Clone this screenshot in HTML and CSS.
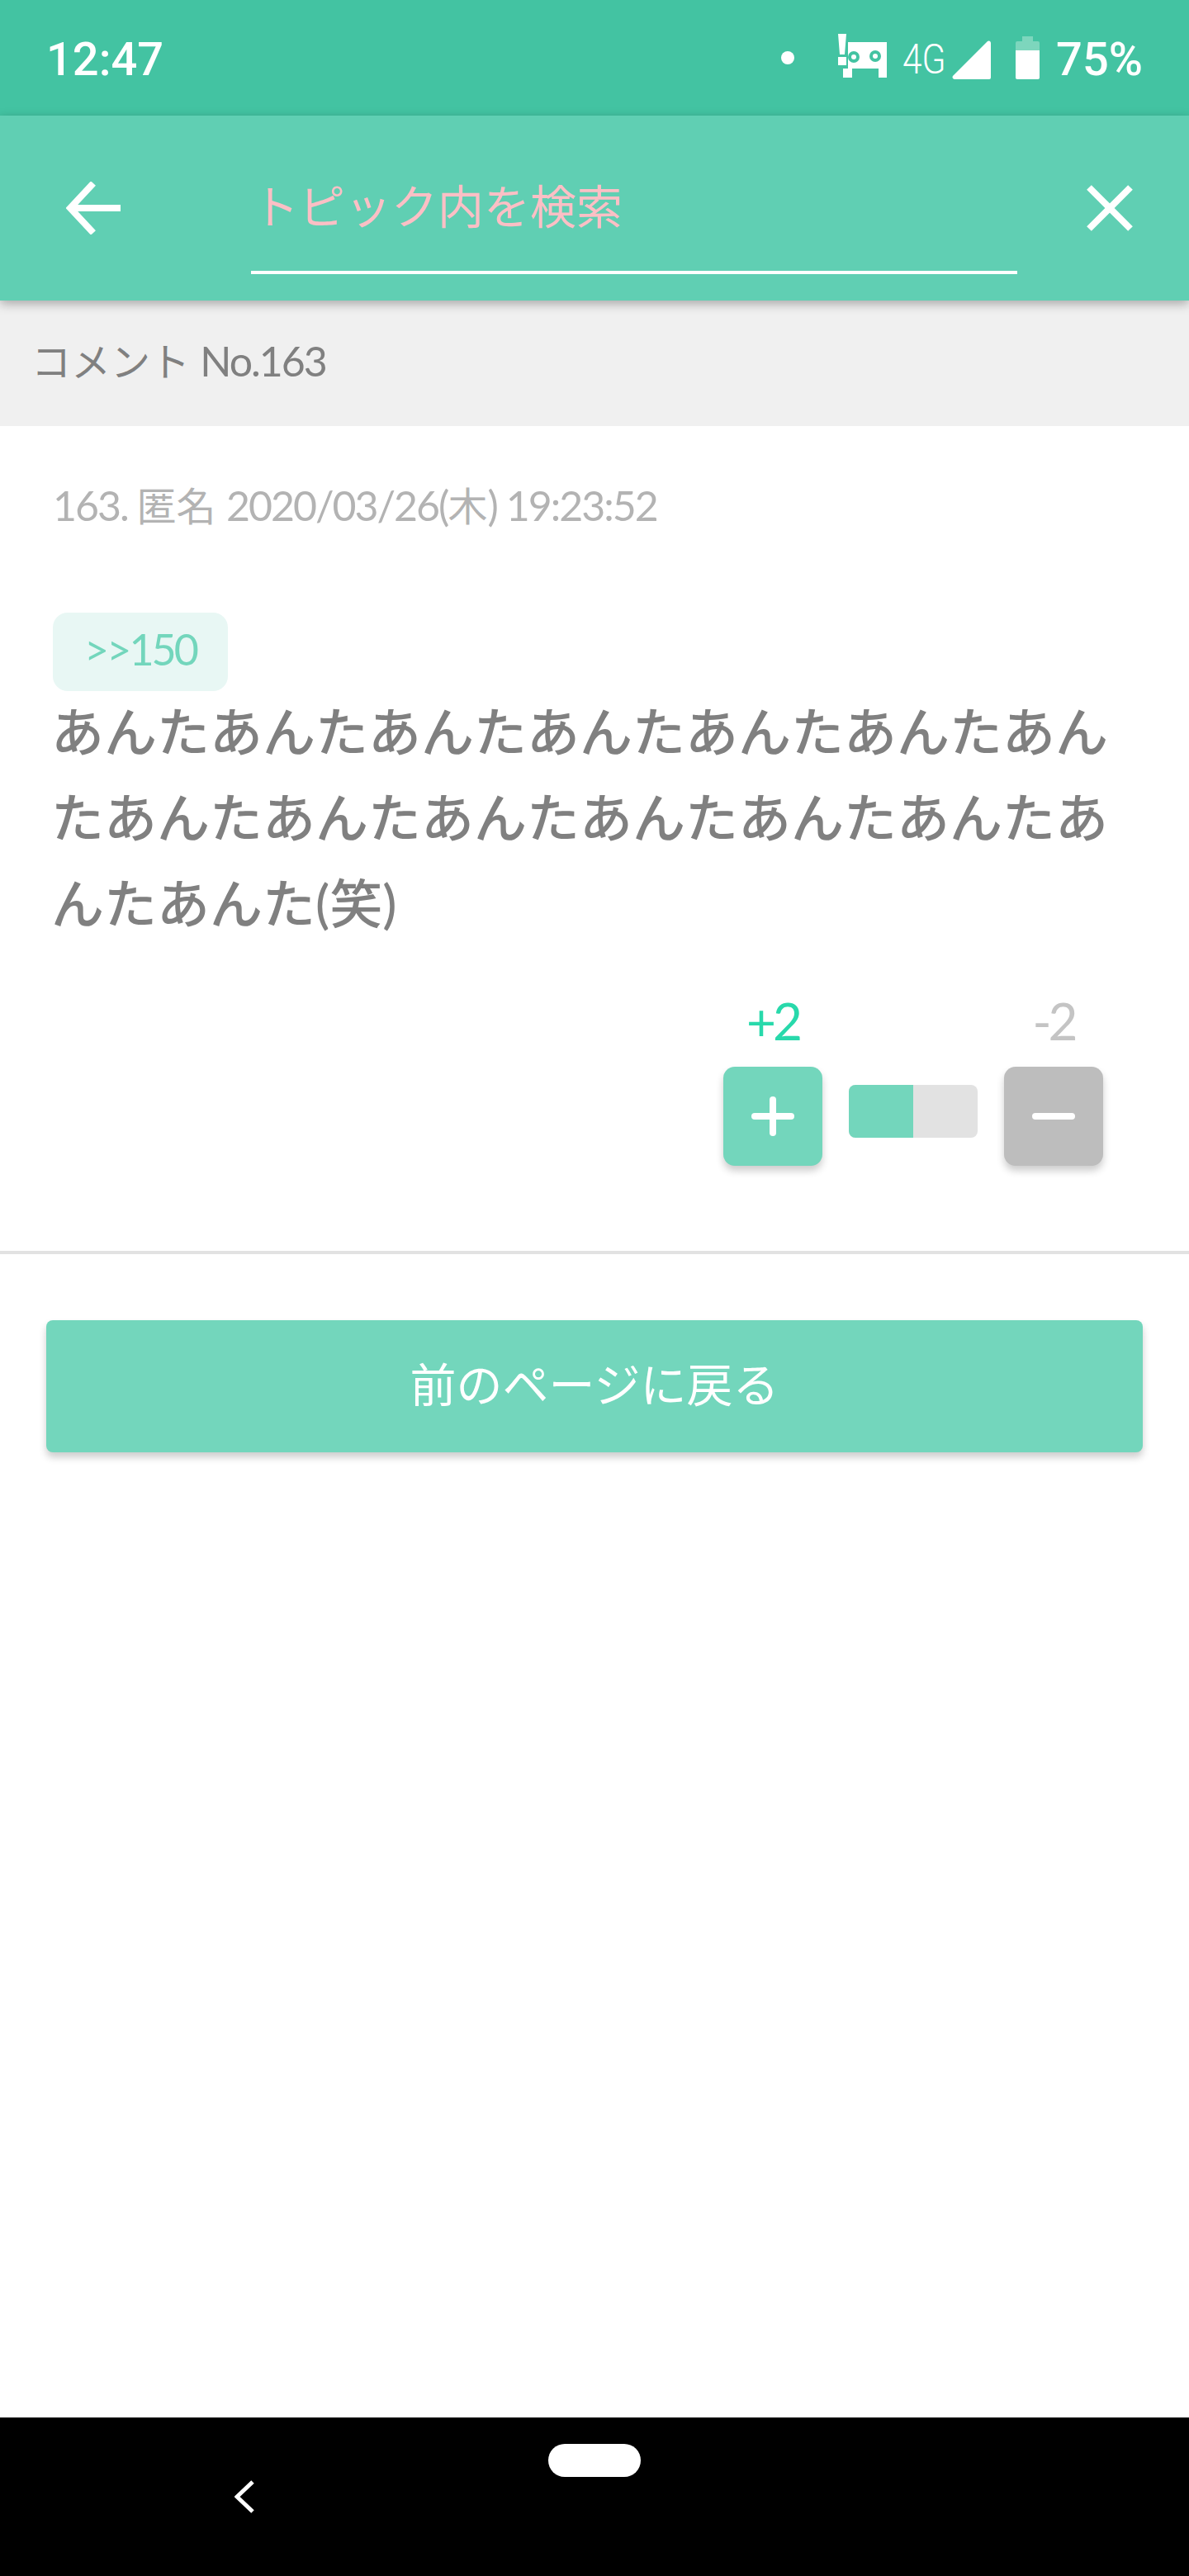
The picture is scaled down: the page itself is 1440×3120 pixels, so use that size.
FILE: index.html
```html
<!DOCTYPE html>
<html lang="ja">
<head>
    <meta charset="UTF-8">
    <title>コメント No.163</title>
    <link rel="stylesheet" href="styles.css">
</head>
<body>
    <div class="phone">
        <!-- status bar -->
        <div class="status">
            <span class="clock">12:47</span>
            <div class="status-icons">
                <span class="dot"></span>
                <svg class="carrier" width="61" height="53" viewBox="0 0 61 53">
                    <path fill="#fff" d="M1 0h10L9 25H3zM1 28h10v10H1z"/>
                    <path fill="#fff" d="M13 10h47v43H50V42H18v11H7V42h6z"/>
                    <circle cx="20" cy="28" r="7" fill="#43c3a2"/>
                    <circle cx="46" cy="27" r="7" fill="#43c3a2"/>
                    <circle cx="20" cy="28" r="3" fill="#fff"/>
                    <circle cx="46" cy="27" r="3" fill="#fff"/>
                </svg>
                <span class="net">4G</span>
                <svg class="signal" width="47" height="47" viewBox="0 0 47 47">
                    <path fill="#fff" d="M43 1a2.500 2.500 0 0 1 4 2v42a2 2 0 0 1-2 2H3a2.500 2.500 0 0 1-2-4z"/>
                </svg>
                <svg class="battery" width="29" height="52" viewBox="0 0 29 52">
                    <path fill="#7dd6bd" d="M8 0h13v6h6a2 2 0 0 1 2 2v9H0V8a2 2 0 0 1 2-2h6z"/>
                    <path fill="#fff" d="M0 17h29v33a2 2 0 0 1-2 2H2a2 2 0 0 1-2-2z"/>
                </svg>
                <span class="percent">75%</span>
            </div>
        </div>

        <!-- search header -->
        <header class="search-bar">
            <svg class="back" width="66" height="64" viewBox="0 0 66 64">
                <path fill="none" stroke="#fff" stroke-width="8" d="M33 2L5 32l28 30M5 32h61"/>
            </svg>
            <div class="search-field">トピック内を検索</div>
            <svg class="close" width="56" height="56" viewBox="0 0 56 56">
                <path fill="none" stroke="#fff" stroke-width="8" d="M3 3l50 50M53 3L3 53"/>
            </svg>
        </header>

        <div class="section-title"><span class="ja">コメント </span>No.163</div>

        <!-- comment -->
        <article class="comment">
            <div class="comment-meta">163. <span class="ja">匿名 </span>2020/03/26(<span class="ja">木</span>) 19:23:52</div>
            <a class="anchor">&gt;&gt;150</a>
            <p class="comment-body">あんたあんたあんたあんたあんたあんたあんたあんたあんたあんたあんたあんたあんたあんたあんた(笑)</p>
            <div class="votes">
                <div class="vote">
                    <span class="count plus">+2</span>
                    <button class="vote-btn plus-btn"><span class="bar-h"></span><span class="bar-v"></span></button>
                </div>
                <div class="ratio"><div class="ratio-fill"></div></div>
                <div class="vote">
                    <span class="count minus">-2</span>
                    <button class="vote-btn minus-btn"><span class="bar-h"></span></button>
                </div>
            </div>
        </article>

        <div class="back-wrap">
            <button class="back-page">前のページに戻る</button>
        </div>

        <!-- nav bar -->
        <div class="nav">
            <svg class="nav-back" width="24" height="40" viewBox="0 0 24 40">
                <path fill="none" stroke="#fff" stroke-width="5" d="M22 2L3 20l19 18"/>
            </svg>
            <span class="pill"></span>
        </div>
    </div>
</body>
</html>
```

FILE: styles.css
```css
* {
    box-sizing: border-box;
}

body {
    margin: 0;
    background: #fff;
    font-family: Lato, "Noto Sans CJK JP", sans-serif;
}

.phone {
    width: 1440px;
    height: 3120px;
    display: flex;
    flex-direction: column;
}

/* Japanese runs keep their own size inside narrowed latin text */
.ja {
    font-size: 48px;
    letter-spacing: 0;
}

/* status bar */
.status {
    height: 140px;
    background: #43c3a2;
    color: #fff;
    display: flex;
    align-items: center;
    justify-content: space-between;
    padding: 4px 56px 0 56px;
    font-family: Roboto, sans-serif;
}

.clock {
    font-size: 56px;
    font-weight: 500;
}

.status-icons {
    display: flex;
    align-items: center;
}

.dot {
    width: 16px;
    height: 16px;
    border-radius: 50%;
    background: #fff;
    margin: -4px 52px 0 0;
}

.carrier {
    margin: -10px 18px 0 0;
}

.net {
    width: 50px;
    font-size: 50px;
    font-weight: 300;
    transform: scaleX(0.85);
    transform-origin: left center;
    margin-right: 10px;
}

.signal {
    margin-right: 30px;
}

.battery {
    margin: -4px 20px 0 0;
}

.percent {
    font-size: 56px;
    font-weight: 500;
}

/* header */
.search-bar {
    height: 224px;
    background: #60cfb3;
    display: flex;
    align-items: center;
    padding: 0 68px 0 80px;
    box-shadow: 0 4px 12px rgba(0, 0, 0, 0.3);
    position: relative;
}

.search-field {
    width: 928px;
    height: 160px;
    margin: 0 84px 0 158px;
    border-bottom: 4px solid #fff;
    color: #fbbfc5;
    font-size: 56px;
    line-height: 156px;
    padding-left: 2px;
}

.section-title {
    height: 152px;
    background: #f0f0f0;
    color: #808080;
    font-size: 50px;
    letter-spacing: -2px;
    line-height: 146px;
    padding-left: 38px;
}

/* comment */
.comment {
    height: 1003px;
    padding: 0 64px;
    border-bottom: 4px solid #e2e2e2;
}

.comment-meta {
    color: #b3b3b3;
    font-size: 50px;
    letter-spacing: -2px;
    line-height: 60px;
    margin-top: 66px;
    margin-bottom: 99px;
}

.anchor {
    display: block;
    width: 212px;
    height: 95px;
    border-radius: 18px;
    background: #e8f7f4;
    color: #73d6bc;
    font-size: 52px;
    letter-spacing: -3px;
    line-height: 88px;
    text-align: center;
}

.comment-body {
    margin: -3px 0 0 -2px;
    width: 1300px;
    color: #808080;
    font-size: 64px;
    font-weight: 500;
    line-height: 104px;
}

.votes {
    display: flex;
    justify-content: flex-end;
    align-items: flex-end;
    gap: 32px;
    padding-right: 40px;
    margin-top: 36px;
}

.vote {
    display: flex;
    flex-direction: column;
    align-items: center;
    width: 120px;
}

.count {
    font-size: 62px;
    letter-spacing: -4px;
    line-height: 108px;
    margin-bottom: 2px;
}

.count.plus {
    color: #28d9ab;
}

.count.minus {
    color: #c4c4c4;
}

.vote-btn {
    width: 120px;
    height: 120px;
    border: 0;
    border-radius: 14px;
    position: relative;
    box-shadow: 0 6px 10px rgba(0, 0, 0, 0.2);
}

.plus-btn {
    background: #73d6bc;
}

.minus-btn {
    background: #bdbdbd;
}

.bar-h,
.bar-v {
    position: absolute;
    background: #fff;
    border-radius: 4px;
}

.bar-h {
    width: 52px;
    height: 8px;
    left: 34px;
    top: 56px;
}

.bar-v {
    width: 8px;
    height: 48px;
    left: 56px;
    top: 36px;
}

.ratio {
    width: 156px;
    height: 64px;
    border-radius: 8px;
    background: #e2e2e2;
    overflow: hidden;
    margin-bottom: 34px;
}

.ratio-fill {
    width: 50%;
    height: 100%;
    background: #73d6bc;
}

/* back button */
.back-wrap {
    flex: 1;
    padding: 80px 56px 0;
}

.back-page {
    width: 100%;
    height: 160px;
    border: 0;
    border-radius: 8px;
    background: #73d6bc;
    color: #fff;
    font-family: inherit;
    font-size: 56px;
    padding-bottom: 12px;
    box-shadow: 0 6px 10px rgba(0, 0, 0, 0.2);
}

/* nav bar */
.nav {
    height: 192px;
    background: #000;
    position: relative;
    flex-shrink: 0;
}

.nav-back {
    position: absolute;
    left: 284px;
    top: 76px;
}

.pill {
    position: absolute;
    left: 664px;
    top: 32px;
    width: 112px;
    height: 40px;
    border-radius: 20px;
    background: #fff;
}
```
